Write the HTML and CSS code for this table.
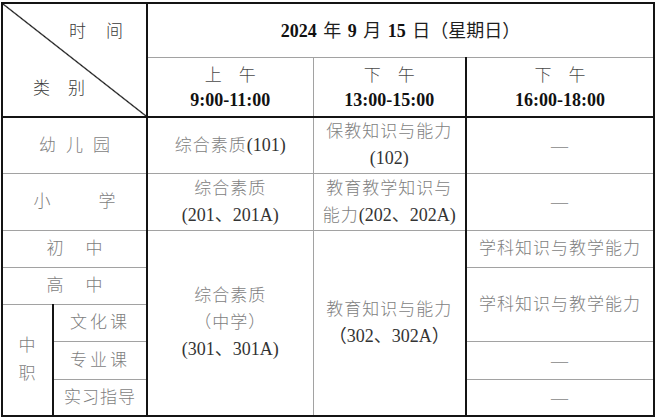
FILE: index.html
```html
<!DOCTYPE html>
<html lang="zh-CN">
<head>
<meta charset="utf-8">
<title>考试时间安排</title>
<link rel="stylesheet" href="styles.css">
</head>
<body>
<table class="schedule">
  <colgroup>
    <col class="c-a"><col class="c-b"><col class="c-c"><col class="c-d"><col class="c-e">
  </colgroup>
  <tr class="r-h1">
    <td class="corner bc hb" rowspan="2" colspan="2">
      <div class="corner-in">
        <div class="corner-top"><span class="sp g20"><span>时</span><span>间</span></span></div>
        <div class="corner-bot"><span class="sp g18"><span>类</span><span>别</span></span></div>
      </div>
    </td>
    <td class="date" colspan="3"><span class="nb">2024</span> 年 <span class="nb">9</span> 月 <span class="nb">15</span> 日（星期日）</td>
  </tr>
  <tr class="r-h2">
    <td class="period hb"><span class="sp g16"><span>上</span><span>午</span></span><br><span class="nb">9:00-11:00</span></td>
    <td class="period hb"><span class="sp g16"><span>下</span><span>午</span></span><br><span class="nb">13:00-15:00</span></td>
    <td class="period hb be"><span class="sp g16"><span>下</span><span>午</span></span><br><span class="nb">16:00-18:00</span></td>
  </tr>
  <tr class="r-1">
    <td class="cat bc" colspan="2"><span class="sp g10"><span>幼</span><span>儿</span><span>园</span></span></td>
    <td>综合素质<span class="n">(101)</span></td>
    <td>保教知识与能力<br><span class="n">(102)</span></td>
    <td class="be dash">—</td>
  </tr>
  <tr class="r-2">
    <td class="cat bc" colspan="2"><span class="sp g48"><span>小</span><span>学</span></span></td>
    <td>综合素质<br><span class="n">(201、201A)</span></td>
    <td>教育教学知识与<br>能力<span class="n">(202、202A)</span></td>
    <td class="be dash">—</td>
  </tr>
  <tr class="r-3">
    <td class="cat bc" colspan="2"><span class="sp g22"><span>初</span><span>中</span></span></td>
    <td rowspan="5">综合素质<br>（中学）<br><span class="n">(301、301A)</span></td>
    <td rowspan="5">教育知识与能力<br><span class="n">（302、302A）</span></td>
    <td class="be">学科知识与教学能力</td>
  </tr>
  <tr class="r-4">
    <td class="cat bc" colspan="2"><span class="sp g22"><span>高</span><span>中</span></span></td>
    <td class="be" rowspan="2">学科知识与教学能力</td>
  </tr>
  <tr class="r-5">
    <td class="zz" rowspan="3">中<br>职</td>
    <td class="sub bc"><span class="ls3">文化课</span></td>
  </tr>
  <tr class="r-6">
    <td class="sub bc"><span class="ls3">专业课</span></td>
    <td class="be dash">—</td>
  </tr>
  <tr class="r-7">
    <td class="sub bc"><span class="ls1">实习指导</span></td>
    <td class="be dash">—</td>
  </tr>
</table>
</body>
</html>
```

FILE: styles.css
```css
html, body {
  margin: 0;
  background: #ffffff;
}
body {
  padding: 2px 0 0 1px;
  font-family: "Liberation Serif", "Noto Sans CJK SC", serif;
}

.schedule {
  border-collapse: collapse;
  table-layout: fixed;
  width: 652px;
  border: 2px solid #141414;
}

.c-a { width: 51px; }
.c-b { width: 94px; }
.c-c { width: 166px; }
.c-d { width: 153px; }
.c-e { width: 188px; }

.schedule td {
  border: 1px solid #a2a2a2;
  padding: 0;
  text-align: center;
  vertical-align: middle;
  font-size: 17px;
  letter-spacing: 1px;
  line-height: 27px;
  color: #7e7e7e;
  font-weight: 300;
}

/* thick separators */
.schedule td.bc { border-right: 2px solid #141414; }
.schedule td.hb { border-bottom: 2px solid #141414; }
.schedule td.be { border-left: 2px solid #141414; }
.schedule td.zz { border-right: 2px solid #141414; line-height: 28px; }

/* row heights */
.r-h1 { height: 54px; }
.r-h2 { height: 59px; }
.r-1 { height: 56px; }
.r-2 { height: 57px; }
.r-3 { height: 37px; }
.r-4 { height: 37px; }
.r-5 { height: 37px; }
.r-6 { height: 38px; }
.r-7 { height: 37px; }

/* diagonal corner */
.schedule td.corner {
  background: linear-gradient(to top right, transparent calc(50% - 1.2px), #141414 50%, transparent calc(50% + 1.2px));
  color: #3a3a3a;
  text-align: left;
  line-height: 24px;
}
.corner-in {
  height: 112px;
  display: flex;
  flex-direction: column;
  justify-content: space-between;
  padding: 16px 0 15px;
  box-sizing: border-box;
}
.corner-top { padding-left: 66px; }
.corner-bot { padding-left: 30px; }

.schedule td.date {
  color: #1e1e1e;
  font-size: 18px;
  letter-spacing: 0;
  word-spacing: 2px;
  font-weight: 400;
  padding-top: 3px;
}
.schedule td.period {
  color: #4a4a4a;
  line-height: 24px;
  padding-top: 3px;
  letter-spacing: 0;
}

.nb {
  font-family: "Liberation Serif", serif;
  font-weight: 700;
  font-size: 18px;
  color: #111;
  letter-spacing: 0;
}
.n {
  font-family: "Liberation Serif", "Noto Sans CJK SC", serif;
  font-weight: 400;
  font-size: 18px;
  color: #333;
  letter-spacing: 0;
}

.schedule td.dash { color: #9a9a9a; }

/* spaced-out labels */
.sp { display: inline-flex; letter-spacing: 0; }
.g10 { gap: 10px; }
.g16 { gap: 17px; }
.g18 { gap: 18px; }
.g20 { gap: 20px; }
.g22 { gap: 22px; }
.g48 { gap: 48px; }
.ls1 { letter-spacing: 1px; }
.ls3 { letter-spacing: 3px; }
```
